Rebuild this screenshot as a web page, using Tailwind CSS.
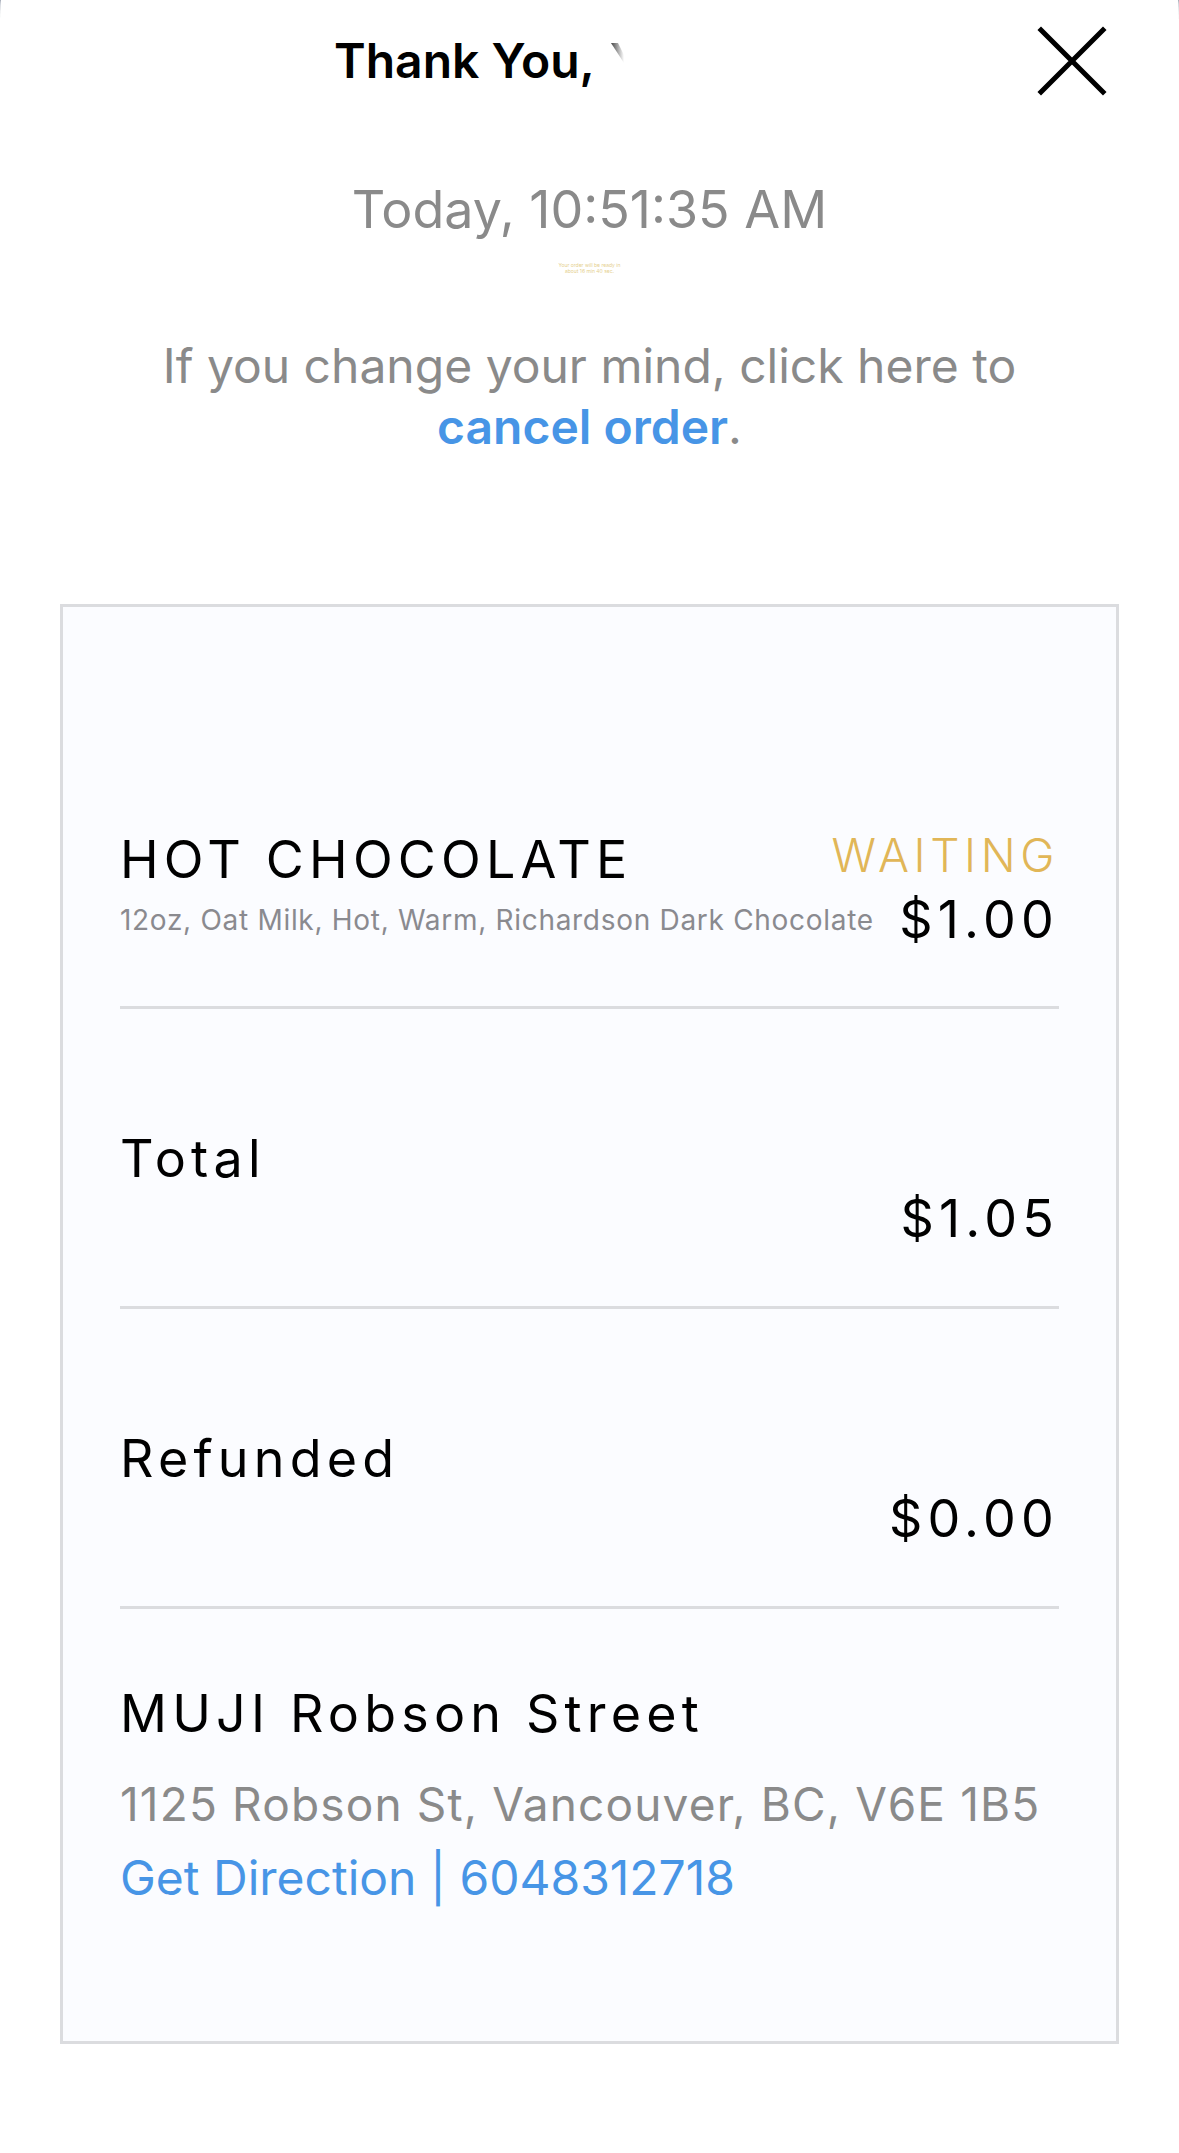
<!DOCTYPE html>
<html lang="en">
<head>
  <meta charset="UTF-8" />
  <meta name="viewport" content="width=device-width, initial-scale=1.0"/>
  <title>Order Status</title>
  <script src="https://cdn.jsdelivr.net/npm/@tailwindcss/browser@4"></script>
</head>
<body class="bg-gray-400 font-['Inter',sans-serif] text-black">
  <div class="min-h-screen bg-white rounded-tl-[1px_24px] rounded-tr-[1px_24px]">
    <!-- Sheet header -->
    <header class="grid grid-cols-[1fr_auto_1fr] items-center h-[122px] px-18">
      <h1 class="col-start-2 w-[511px] flex items-center gap-4 text-[48px] leading-[60px] font-semibold whitespace-nowrap">
        Thank You,
        <svg class="w-4 h-9" viewBox="0 0 16 36" aria-hidden="true">
          <defs>
            <linearGradient id="fade" x1="0" y1="0" x2="1" y2="0">
              <stop offset="0" stop-color="#444"/>
              <stop offset="1" stop-color="#fff"/>
            </linearGradient>
          </defs>
          <path d="M0 0H7L13 12V20Z" fill="url(#fade)"/>
        </svg>
      </h1>
      <button type="button" aria-label="Close" class="justify-self-end">
        <svg class="w-[70px] h-[70px]" viewBox="0 0 70 70" fill="none" stroke="black" stroke-width="5" stroke-linecap="square">
          <path d="M4 4L66 66M66 4L4 66"/>
        </svg>
      </button>
    </header>

    <main class="px-15 pb-27">
      <section class="pt-[52px] text-center text-[#8a8a8a]">
        <p class="text-[52px] leading-[72px]">Today, 10:51:35 AM</p>
        <p class="mt-4 text-[5px] leading-[6px] text-[#e5cf8e]">Your order will be ready in<br>about 16 min 40 sec.</p>
        <p class="mt-[61px] text-[48px] leading-[61px]">
          If you change your mind, click here to<br>
          <a href="#cancel" class="font-semibold text-[#4795e6]">cancel order</a>.
        </p>
      </section>

      <!-- Receipt -->
      <section class="mt-[147px] border-3 border-[#dbdcdf] bg-[#fbfcff] px-[57px] pt-[93px] pb-[127px]">
        <div class="border-b-3 border-[#dbdcdf] pt-30 pb-14">
          <div class="flex justify-between items-end">
            <h2 class="text-[52px] leading-[60px] tracking-widest">HOT CHOCOLATE</h2>
            <span class="text-[46px] leading-[70px] font-light tracking-widest text-[#e1b657]">WAITING</span>
          </div>
          <div class="flex justify-between whitespace-nowrap leading-[60px]">
            <span class="text-[28px] tracking-wide text-[#8a8a8f]">12oz, Oat Milk, Hot, Warm, Richardson Dark Chocolate</span>
            <span class="text-[52px] tracking-widest">$1.00</span>
          </div>
        </div>
        <div class="border-b-3 border-[#dbdcdf] pt-30 pb-[57px] text-[52px] leading-[60px] tracking-widest">
          <p>Total</p>
          <p class="text-right">$1.05</p>
        </div>
        <div class="border-b-3 border-[#dbdcdf] pt-30 pb-[57px] text-[52px] leading-[60px] tracking-widest">
          <p>Refunded</p>
          <p class="text-right">$0.00</p>
        </div>
        <div class="pt-[75px] leading-[73px] whitespace-nowrap">
          <h2 class="mb-6 text-[52px] leading-[60px] tracking-widest">MUJI Robson Street</h2>
          <p class="text-[46px] text-[#8a8a8a] tracking-wide">1125 Robson St, Vancouver, BC, V6E 1B5</p>
          <p class="text-[48px] text-[#4795e6]"><a href="#map">Get Direction</a> | <a href="tel:6048312718">6048312718</a></p>
        </div>
      </section>
    </main>
  </div>
</body>
</html>
